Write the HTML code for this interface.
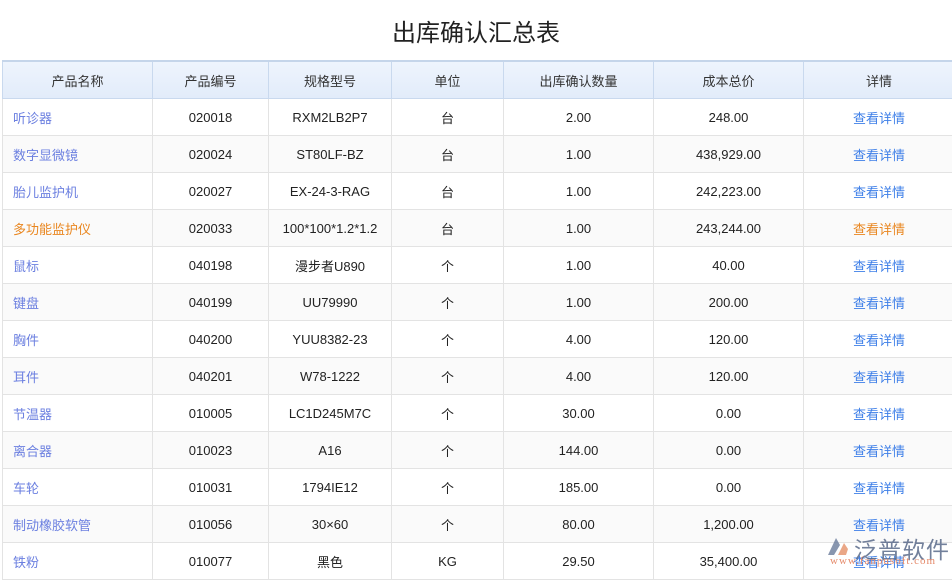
<!DOCTYPE html>
<html><head><meta charset="utf-8"><style>
body{margin:0;width:952px;height:580px;overflow:hidden;background:#fff;font-family:"Liberation Sans","Noto Sans CJK SC",sans-serif;}
.title{position:absolute;left:0;top:16px;width:952px;text-align:center;font-size:24px;color:#222;line-height:36px;}
table{position:absolute;left:2px;top:60px;border-collapse:collapse;table-layout:fixed;width:952px;}
td,th{border:1px solid #e3e3e3;height:36px;padding:0;text-align:center;font-size:13px;color:#222;font-weight:normal;}
th{background:linear-gradient(#eef4fd,#e2ecfa);border-color:#c9d9ee;border-top:2px solid #c5d5ea;color:#333;}
td.n{text-align:left;padding-left:10px;color:#6b7fe0;}
td.l{color:#3e7fe8;}
tr:nth-child(odd) td{background:#fafafa;}
.o{color:#e9861f!important;}
.logo{position:absolute;left:822px;top:533px;}
</style></head><body>
<div class="title">出库确认汇总表</div>
<table>
<colgroup><col style="width:150px"><col style="width:116px"><col style="width:123px"><col style="width:112px"><col style="width:150px"><col style="width:150px"><col style="width:151px"></colgroup>
<tr><th>产品名称</th><th>产品编号</th><th>规格型号</th><th>单位</th><th>出库确认数量</th><th>成本总价</th><th>详情</th></tr>
<tr><td class="n">听诊器</td><td>020018</td><td>RXM2LB2P7</td><td>台</td><td>2.00</td><td>248.00</td><td class="l">查看详情</td></tr>
<tr><td class="n">数字显微镜</td><td>020024</td><td>ST80LF-BZ</td><td>台</td><td>1.00</td><td>438,929.00</td><td class="l">查看详情</td></tr>
<tr><td class="n">胎儿监护机</td><td>020027</td><td>EX-24-3-RAG</td><td>台</td><td>1.00</td><td>242,223.00</td><td class="l">查看详情</td></tr>
<tr><td class="n o">多功能监护仪</td><td>020033</td><td>100*100*1.2*1.2</td><td>台</td><td>1.00</td><td>243,244.00</td><td class="l o">查看详情</td></tr>
<tr><td class="n">鼠标</td><td>040198</td><td>漫步者U890</td><td>个</td><td>1.00</td><td>40.00</td><td class="l">查看详情</td></tr>
<tr><td class="n">键盘</td><td>040199</td><td>UU79990</td><td>个</td><td>1.00</td><td>200.00</td><td class="l">查看详情</td></tr>
<tr><td class="n">胸件</td><td>040200</td><td>YUU8382-23</td><td>个</td><td>4.00</td><td>120.00</td><td class="l">查看详情</td></tr>
<tr><td class="n">耳件</td><td>040201</td><td>W78-1222</td><td>个</td><td>4.00</td><td>120.00</td><td class="l">查看详情</td></tr>
<tr><td class="n">节温器</td><td>010005</td><td>LC1D245M7C</td><td>个</td><td>30.00</td><td>0.00</td><td class="l">查看详情</td></tr>
<tr><td class="n">离合器</td><td>010023</td><td>A16</td><td>个</td><td>144.00</td><td>0.00</td><td class="l">查看详情</td></tr>
<tr><td class="n">车轮</td><td>010031</td><td>1794IE12</td><td>个</td><td>185.00</td><td>0.00</td><td class="l">查看详情</td></tr>
<tr><td class="n">制动橡胶软管</td><td>010056</td><td>30×60</td><td>个</td><td>80.00</td><td>1,200.00</td><td class="l">查看详情</td></tr>
<tr><td class="n">铁粉</td><td>010077</td><td>黑色</td><td>KG</td><td>29.50</td><td>35,400.00</td><td class="l">查看详情</td></tr>
</table>
<div class="logo">
<svg width="26" height="24" style="position:absolute;left:2px;top:2px;opacity:.8"><path d="M4 20 L12 3 L16 10 L10 20Z" fill="#6b7c9c"/><path d="M14 20 L20 8 L24 14 L22 20Z" fill="#e6926a"/></svg>
<div style="position:absolute;left:32px;top:-2px;font-size:23px;color:#5a6a8a;opacity:.85;white-space:nowrap;letter-spacing:1px">泛普软件</div>
<div style="position:absolute;left:8px;top:22px;font-size:11px;color:#e58a6a;font-family:'Liberation Serif',serif;white-space:nowrap;letter-spacing:1px">www.fanpusoft.com</div>
</div>
</body></html>
